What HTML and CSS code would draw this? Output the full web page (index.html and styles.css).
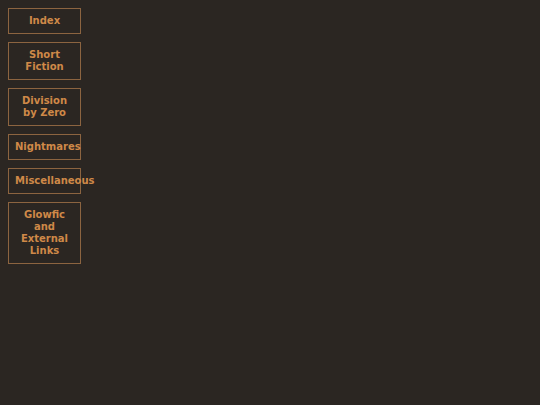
FILE: index.html
```html
<!DOCTYPE html>
<html lang="en">
<head>
    <meta charset="UTF-8">
    <meta name="viewport" content="width=device-width, initial-scale=1.0">
    <title>Index</title>
    <link rel="stylesheet" href="styles.css">
</head>
<body>
    <nav id="menu">
        <a class="boton" href="#">Index</a>
        <a class="boton" href="#">Short Fiction</a>
        <a class="boton" href="#">Division by Zero</a>
        <a class="boton" href="#">Nightmares</a>
        <a class="boton" href="#">Miscellaneous</a>
        <a class="boton" href="#">Glowfic and External Links</a>
    </nav>
</body>
</html>
```
FILE: styles.css
```css
body {
    margin: 0;
    padding: 8px;
    background: #2b2622;
    font-family: "DejaVu Sans", Verdana, sans-serif;
}

#menu {
    display: flex;
    flex-direction: column;
    align-items: flex-start;
    gap: 8px;
}

.boton {
    display: block;
    width: 59px;
    padding: 6px;
    border: 1px solid #8c6440;
    color: #cf8948;
    font-size: 10px;
    font-weight: bold;
    line-height: 12px;
    text-align: center;
    text-decoration: none;
}
```
